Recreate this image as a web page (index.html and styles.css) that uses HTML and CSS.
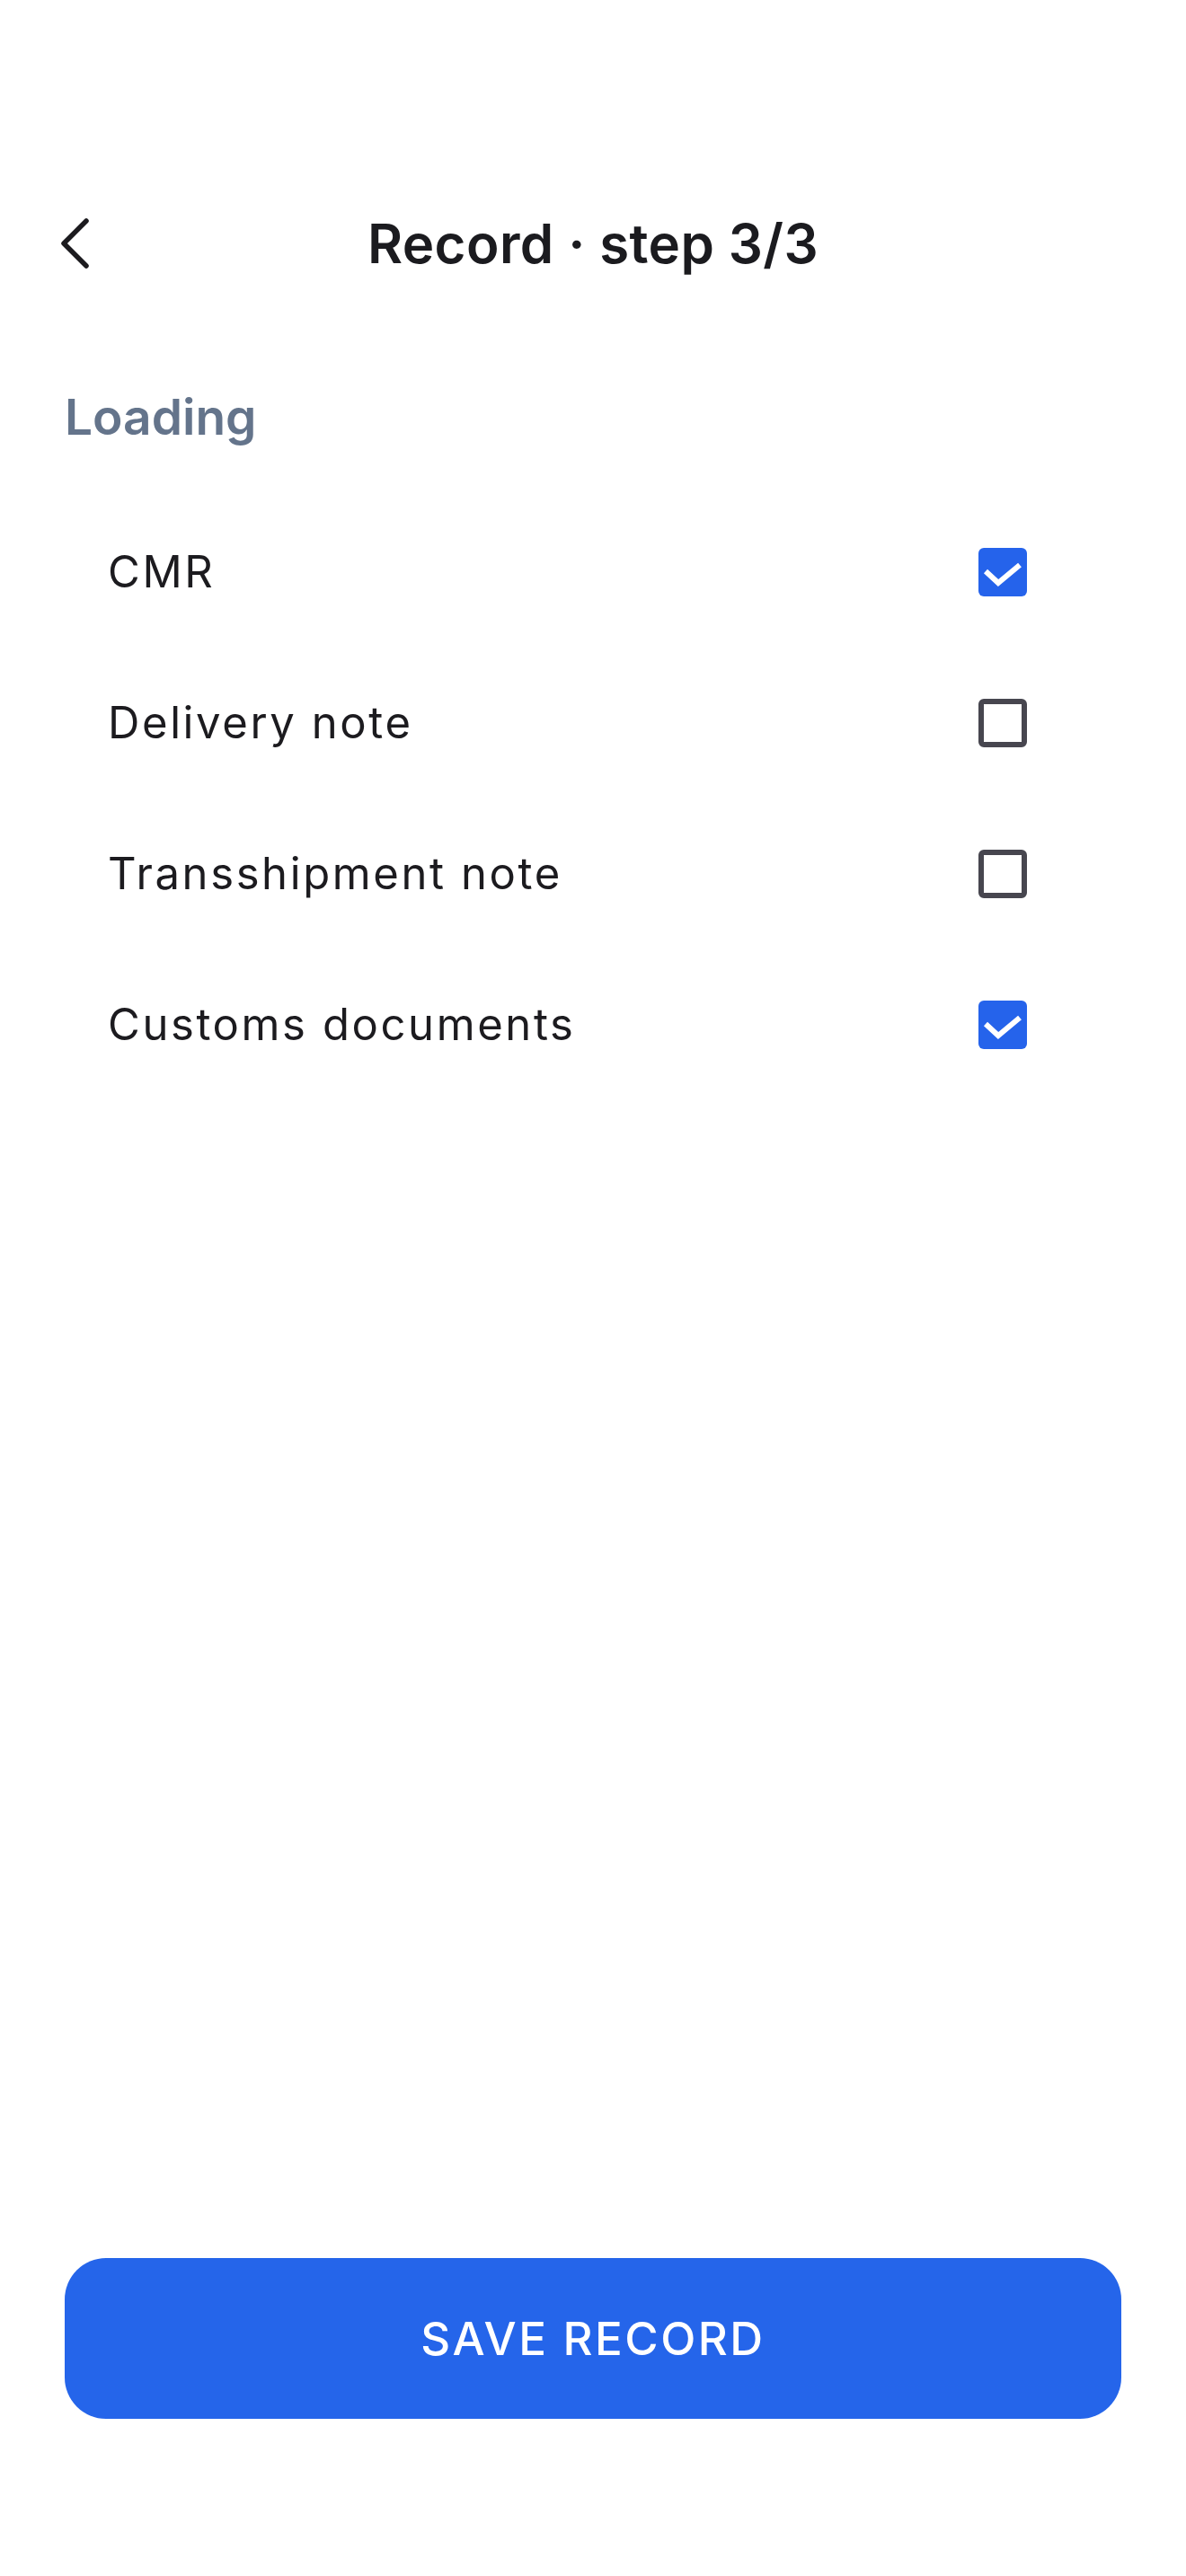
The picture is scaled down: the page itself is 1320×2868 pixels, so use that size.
FILE: index.html
```html
<!DOCTYPE html>
<html lang="en">
<head>
<meta charset="utf-8">
<title>Record · step 3/3</title>
<link rel="stylesheet" href="styles.css">
</head>
<body>
<div class="screen">
  <header class="topbar">
    <button class="back" aria-label="Back">
      <svg width="40" height="64" viewBox="0 0 40 64" aria-hidden="true">
        <path d="M34 7 L9 32 L34 57" fill="none" stroke="#1c1b1f" stroke-width="5.5" stroke-linecap="round" stroke-linejoin="round"/>
      </svg>
    </button>
    <h1 class="title">Record · step 3/3</h1>
    <span class="spacer"></span>
  </header>

  <main class="content">
    <h2 class="section">Loading</h2>
    <ul class="list">
      <li class="row"><span class="label">CMR</span><span class="box checked"><svg viewBox="0 0 54 54" width="54" height="54" aria-hidden="true"><path d="M8 26 L22 39 L46 19" fill="none" stroke="#fff" stroke-width="6"/></svg></span></li>
      <li class="row"><span class="label">Delivery note</span><span class="box"></span></li>
      <li class="row"><span class="label">Transshipment note</span><span class="box"></span></li>
      <li class="row"><span class="label">Customs documents</span><span class="box checked"><svg viewBox="0 0 54 54" width="54" height="54" aria-hidden="true"><path d="M8 26 L22 39 L46 19" fill="none" stroke="#fff" stroke-width="6"/></svg></span></li>
    </ul>
  </main>

  <footer class="actions">
    <button class="primary">SAVE RECORD</button>
  </footer>
</div>
</body>
</html>
```

FILE: styles.css
```css
* { box-sizing: border-box; }
html, body { margin: 0; padding: 0; background: #ffffff; }
body { font-family: Inter, "Noto Sans", "Liberation Sans", sans-serif; color: #1c1b1f; }

.screen {
  width: 1320px;
  min-height: 2868px;
  display: flex;
  flex-direction: column;
}

.topbar {
  display: grid;
  grid-template-columns: 1fr auto 1fr;
  align-items: center;
  height: 80px;
  margin-top: 231px;
  padding-left: 62px;
}
.back {
  justify-self: start;
  background: none;
  border: 0;
  padding: 0;
  width: 40px;
  height: 64px;
  display: flex;
}
.title {
  margin: 0;
  font-size: 60px;
  line-height: 80px;
  font-weight: 600;
  color: #1b1b1f;
  letter-spacing: 0.4px;
  margin-left: -62px;
}

.content {
  flex: 1;
  padding: 120px 72px 0;
}
.section {
  margin: 0;
  font-size: 55px;
  line-height: 66px;
  font-weight: 600;
  color: #64748b;
}
.list {
  list-style: none;
  margin: 55px 0 0;
  padding: 0;
}
.row {
  height: 168px;
  display: flex;
  align-items: center;
  justify-content: space-between;
  padding: 0 105px 0 48px;
}
.label {
  font-size: 49px;
  line-height: 60px;
  letter-spacing: 2.6px;
  color: #1c1b1f;
  margin-top: 2px;
}
.box {
  width: 54px;
  height: 54px;
  border: 6px solid #47464f;
  border-radius: 6px;
  display: block;
  position: relative;
  margin-top: 2px;
}
.box.checked {
  border: 0;
  background: #2563eb;
}
.box.checked svg { display: block; }

.actions {
  padding: 0 72px 175px;
}
.primary {
  width: 100%;
  height: 179px;
  border: 0;
  border-radius: 46px;
  background: #2565ea;
  color: #ffffff;
  font-family: Inter, "Noto Sans", "Liberation Sans", sans-serif;
  font-size: 51px;
  font-weight: 500;
  letter-spacing: 2.5px;
  display: flex;
  align-items: center;
  justify-content: center;
}
```
